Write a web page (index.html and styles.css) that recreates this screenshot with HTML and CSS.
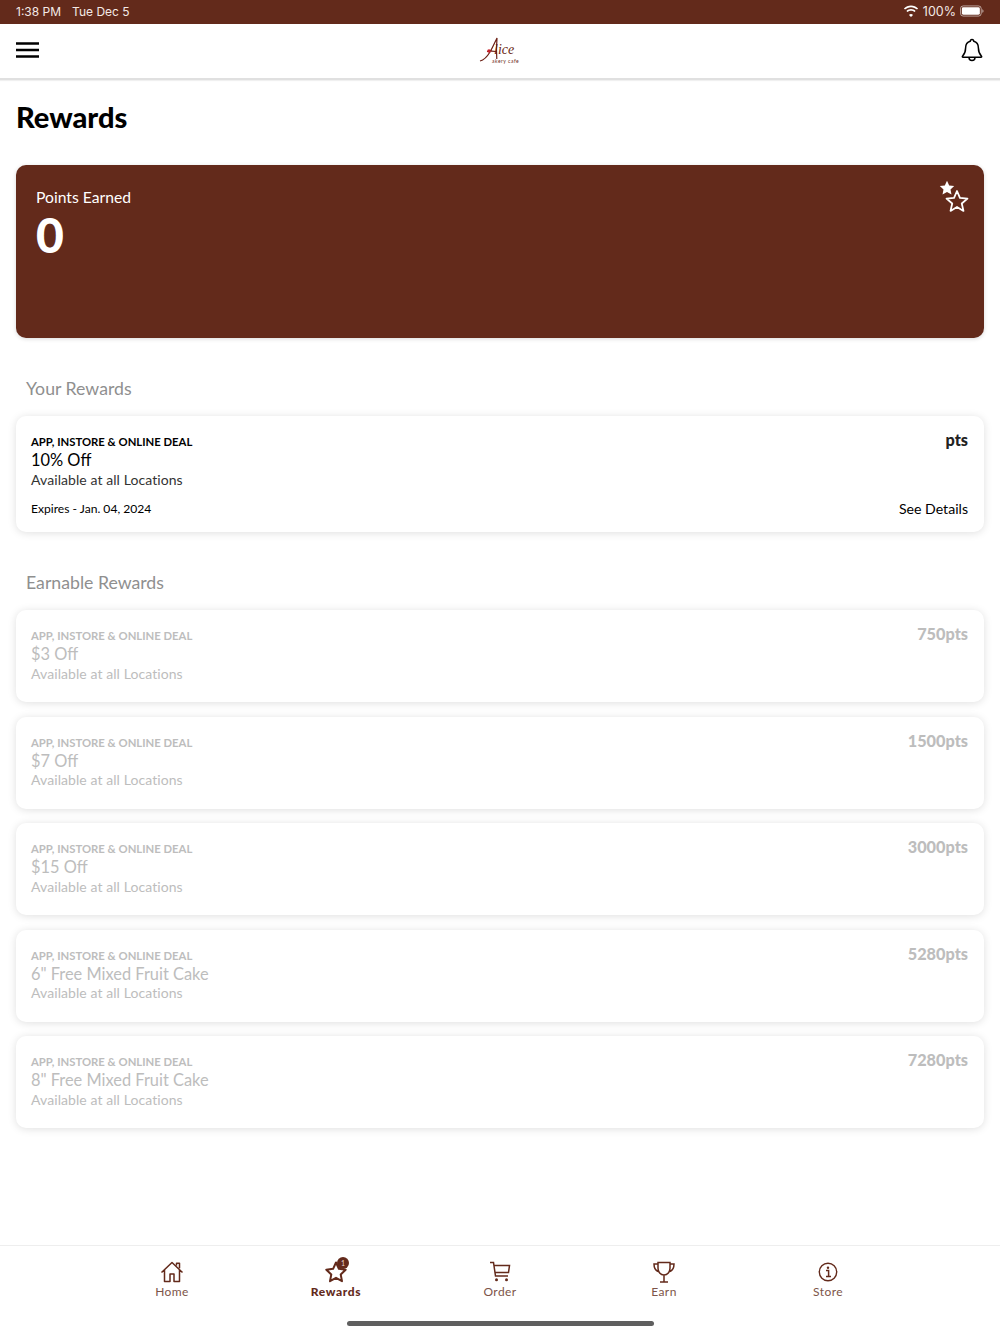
FILE: index.html
```html
<!DOCTYPE html>
<html lang="en">
<head>
<meta charset="utf-8">
<title>Rewards</title>
<link rel="stylesheet" href="styles.css">
</head>
<body>
<div class="app">
  <div class="status">
    <div class="status-left"><span>1:38 PM</span><span>Tue Dec 5</span></div>
    <div class="status-right">
      <svg class="wifi" width="16" height="12" viewBox="0 0 16 12"><path d="M8 2.200c2.300 0 4.400.9 6 2.400l1.100-1.200C13.200 1.500 10.700.4 8 .4S2.800 1.500.9 3.400L2 4.600c1.600-1.500 3.700-2.400 6-2.400zm0 3.500c1.300 0 2.500.5 3.500 1.400l1.100-1.200C11.400 4.700 9.800 4 8 4s-3.400.7-4.600 1.900l1.100 1.200c1-.9 2.200-1.400 3.500-1.400zm0 3.400c-.8 0-1.500.3-2 .8l2 2 2-2c-.5-.5-1.200-.8-2-.8z" fill="#fff"/></svg>
      <span>100%</span>
      <svg class="battery" width="24" height="12" viewBox="0 0 26 12"><rect x=".5" y=".5" width="22.500" height="11" rx="3" fill="none" stroke="#fff" stroke-opacity=".6"/><rect x="2" y="2" width="19.500" height="8" rx="1.600" fill="#fff"/><path d="M24.200 4v4c.8-.3 1.300-1.100 1.300-2s-.5-1.700-1.300-2z" fill="#fff" fill-opacity=".6"/></svg>
    </div>
  </div>
  <header class="topbar">
    <svg class="burger" width="24" height="16" viewBox="0 0 24 16"><path d="M0 1.500h23M0 8h23M0 14.500h23" stroke="#000" stroke-width="2.400"/></svg>
    <div class="logo">
      <svg class="logo-mark" width="42" height="28" viewBox="0 0 42 28">
        <path d="M1 25c4-1 7-4 10-9s5-10 7-14c-.5 6-.8 14-.2 21M8 15.500c3-.5 6-.5 9 0" fill="none" stroke="#6b1f14" stroke-width="1.200"/>
        <circle cx="10" cy="15" r="1.800" fill="#c8202a"/>
      </svg>
      <span class="logo-name">lice</span>
      <span class="logo-sub">akery cafe</span>
    </div>
    <svg class="bell" width="22" height="24" viewBox="0 0 22 24"><path d="M11 1.500c-1 0-1.700.8-1.700 1.800C6.200 4.100 4.600 6.700 4.600 10c0 4.200-1 6-3.100 8.200-.4.500-.1 1 .5 1h18c.6 0 .9-.5.500-1C18.400 16 17.400 14.200 17.400 10c0-3.300-1.600-5.900-4.700-6.700 0-1-.7-1.800-1.700-1.800zM8 19.500c0 1.900 1.300 3 3 3s3-1.100 3-3" fill="none" stroke="#000" stroke-width="1.500" stroke-linejoin="round"/></svg>
  </header>
  <main class="content">
    <h1 class="title">Rewards</h1>
    <section class="points">
      <div class="points-label">Points Earned</div>
      <div class="points-value">0</div>
      <svg class="points-icon" width="32" height="34" viewBox="0 0 32 34">
        <path d="M8 .8l2.200 4.700 5 .6-3.700 3.500 1 5L8 12.100l-4.500 2.500 1-5L.8 6.100l5-.6z" fill="#fff"/>
        <path d="M18 11l2.940 6.950 7.520.65-5.700 4.950 1.710 7.350L18 27l-6.470 3.900 1.710-7.350-5.700-4.950 7.520-.65z" fill="none" stroke="#fff" stroke-width="1.800" stroke-linejoin="round"/>
      </svg>
    </section>

    <h2 class="section-head">Your Rewards</h2>
    <article class="card card-active">
      <div class="card-row">
        <div>
          <div class="deal">APP, INSTORE &amp; ONLINE DEAL</div>
          <div class="name">10% Off</div>
          <div class="where">Available at all Locations</div>
        </div>
        <div class="pts">pts</div>
      </div>
      <div class="card-foot">
        <span class="expires">Expires - Jan. 04, 2024</span>
        <span class="details">See Details</span>
      </div>
    </article>

    <h2 class="section-head">Earnable Rewards</h2>
    <div class="earn-list">
      <article class="card card-muted">
        <div class="card-row"><div><div class="deal">APP, INSTORE &amp; ONLINE DEAL</div><div class="name">$3 Off</div><div class="where">Available at all Locations</div></div><div class="pts">750pts</div></div>
      </article>
      <article class="card card-muted">
        <div class="card-row"><div><div class="deal">APP, INSTORE &amp; ONLINE DEAL</div><div class="name">$7 Off</div><div class="where">Available at all Locations</div></div><div class="pts">1500pts</div></div>
      </article>
      <article class="card card-muted">
        <div class="card-row"><div><div class="deal">APP, INSTORE &amp; ONLINE DEAL</div><div class="name">$15 Off</div><div class="where">Available at all Locations</div></div><div class="pts">3000pts</div></div>
      </article>
      <article class="card card-muted">
        <div class="card-row"><div><div class="deal">APP, INSTORE &amp; ONLINE DEAL</div><div class="name">6" Free Mixed Fruit Cake</div><div class="where">Available at all Locations</div></div><div class="pts">5280pts</div></div>
      </article>
      <article class="card card-muted">
        <div class="card-row"><div><div class="deal">APP, INSTORE &amp; ONLINE DEAL</div><div class="name">8" Free Mixed Fruit Cake</div><div class="where">Available at all Locations</div></div><div class="pts">7280pts</div></div>
      </article>
    </div>
  </main>
  <nav class="tabbar">
    <div class="tab">
      <svg width="24" height="24" viewBox="0 0 24 24"><path d="M1.500 12.500L12 2.500l10.500 10M4.500 10v11.500h5.500v-7.500h4v7.500h5.500V10M16.500 5.500V3.200h3v5" fill="none" stroke="#632a1b" stroke-width="1.500" stroke-linejoin="round"/></svg>
      <span>Home</span>
    </div>
    <div class="tab tab-active">
      <div class="tab-icon">
        <svg width="24" height="24" viewBox="0 0 24 24"><path d="M12 2.500l2.900 6.300 6.800.9-5 4.700 1.300 6.800-6-3.400-6 3.400 1.300-6.800-5-4.700 6.800-.9z" fill="none" stroke="#632a1b" stroke-width="2" stroke-linejoin="round"/></svg>
        <span class="badge">1</span>
      </div>
      <span>Rewards</span>
    </div>
    <div class="tab">
      <svg width="24" height="24" viewBox="0 0 24 24"><path d="M2 2.500h3.500l2 13.500h12.500M6 5.500h15.500l-1 7H7" fill="none" stroke="#632a1b" stroke-width="1.500"/><circle cx="8.500" cy="19.700" r="1.500" fill="#632a1b"/><circle cx="18.500" cy="19.700" r="1.500" fill="#632a1b"/></svg>
      <span>Order</span>
    </div>
    <div class="tab">
      <svg width="24" height="24" viewBox="0 0 24 24"><path d="M6 2.500h12v5.500c0 4-2.500 7-6 7s-6-3-6-7zM6 4H2c0 4.500 1.500 7 5.500 8M18 4h4c0 4.500-1.500 7-5.500 8M12 15v7M8 22h8" fill="none" stroke="#632a1b" stroke-width="1.500"/></svg>
      <span>Earn</span>
    </div>
    <div class="tab">
      <svg width="24" height="24" viewBox="0 0 24 24"><circle cx="12" cy="12" r="8.700" fill="none" stroke="#632a1b" stroke-width="1.400"/><circle cx="12" cy="7.800" r="1.200" fill="#632a1b"/><path d="M10 10.600h2.600v5.600M10 16.400h5" fill="none" stroke="#632a1b" stroke-width="1.500"/></svg>
      <span>Store</span>
    </div>
  </nav>
  <div class="home-bar-wrap"><div class="home-bar"></div></div>
</div>
</body>
</html>
```

FILE: styles.css
```css
* { box-sizing: border-box; }
html, body { margin: 0; padding: 0; background: #fff; }
body { font-family: "Lato", "Liberation Sans", sans-serif; color: #000; }
.app { width: 1000px; height: 1334px; display: flex; flex-direction: column; overflow: hidden; position: relative; }

.status { height: 24px; flex: none; background: #632a1b; color: #f3e9e6; display: flex; justify-content: space-between; align-items: center; padding: 0 16px 2px 16px; font-family: "Inter", "Liberation Sans", sans-serif; font-size: 12px; }
.status-left { display: flex; gap: 11px; }
.status-right { display: flex; align-items: center; gap: 4px; font-size: 12.500px; }

.topbar { height: 56px; flex: none; display: flex; align-items: center; justify-content: space-between; padding: 0 17px 2px 16px; border-bottom: 2px solid #e0e0e0; box-shadow: 0 1px 1px #f0f0f0; position: relative; background: #fff; }
.logo { position: absolute; left: 479px; top: 12px; width: 42px; height: 28px; }
.logo-mark { display: block; }
.logo-name { position: absolute; left: 15px; top: 8px; font-family: "Liberation Serif", serif; font-style: italic; font-size: 14px; line-height: 12px; color: #6b1f14; }
.logo-sub { position: absolute; left: 13px; top: 22.500px; font-size: 5px; line-height: 5px; letter-spacing: .5px; color: #6b1f14; white-space: nowrap; }

.content { flex: 1; padding: 0 16px; min-height: 0; }
.title { margin: 20px 0 0; font-size: 29px; line-height: 34px; font-weight: 900; }
.points { position: relative; height: 173px; margin-top: 31px; background: #632a1b; border-radius: 10px; color: #fff; padding: 22px 20px; box-shadow: 0 1px 4px rgba(0,0,0,.15); }
.points-label { font-size: 15.700px; line-height: 20px; font-weight: 400; }
.points-value { font-size: 48px; line-height: 56px; font-weight: 900; }
.points-icon { position: absolute; right: 13px; top: 15px; }

.section-head { margin: 40px 0 16px 10px; font-size: 17.700px; line-height: 22px; font-weight: 400; color: #8f8f8f; }

.card { background: #fff; border-radius: 10px; box-shadow: 0 1px 8px rgba(0,0,0,.13); padding: 18px 16px 0 15px; }
.card-active { height: 116px; }
.card-muted { height: 92px; }
.earn-list { display: flex; flex-direction: column; gap: 14.500px; }
.card-row { display: flex; justify-content: space-between; align-items: flex-start; }
.deal { font-size: 11.300px; line-height: 16px; font-weight: 700; }
.name { font-size: 16.400px; line-height: 20px; }
.where { font-size: 14px; line-height: 18px; margin-top: .6px; color: #333; letter-spacing: .08px; }
.pts { font-size: 16.300px; line-height: 16px; font-weight: 900; color: #222; margin-top: -2px; }
.card-foot { display: flex; justify-content: space-between; align-items: center; margin-top: 11px; }
.expires { font-size: 12.100px; line-height: 18px; }
.details { font-size: 14.100px; line-height: 18px; }
.card-muted .deal, .card-muted .name, .card-muted .where, .card-muted .pts { color: #bdbdbd; }

.tabbar { height: 89px; flex: none; display: flex; justify-content: center; padding-top: 14px; border-top: 1px solid #eee; background: #fff; }
.tab { width: 164px; display: flex; flex-direction: column; align-items: center; font-size: 12px; line-height: 14px; color: #7d5448; letter-spacing: .4px; }
.tab svg { display: block; margin-bottom: 1px; }
.tab-active { font-weight: 900; color: #632a1b; letter-spacing: .6px; }
.tab-icon { position: relative; width: 24px; height: 25px; }
.badge { position: absolute; left: 13px; top: -3px; width: 12px; height: 12px; border-radius: 50%; background: #632a1b; color: #e8d5cf; font-size: 7px; line-height: 12px; text-align: center; font-weight: 400; letter-spacing: 0; }

.home-bar-wrap { position: absolute; left: 0; right: 0; bottom: 8px; display: flex; justify-content: center; }
.home-bar { width: 307px; height: 5px; border-radius: 3px; background: #5f5f5f; }
```
